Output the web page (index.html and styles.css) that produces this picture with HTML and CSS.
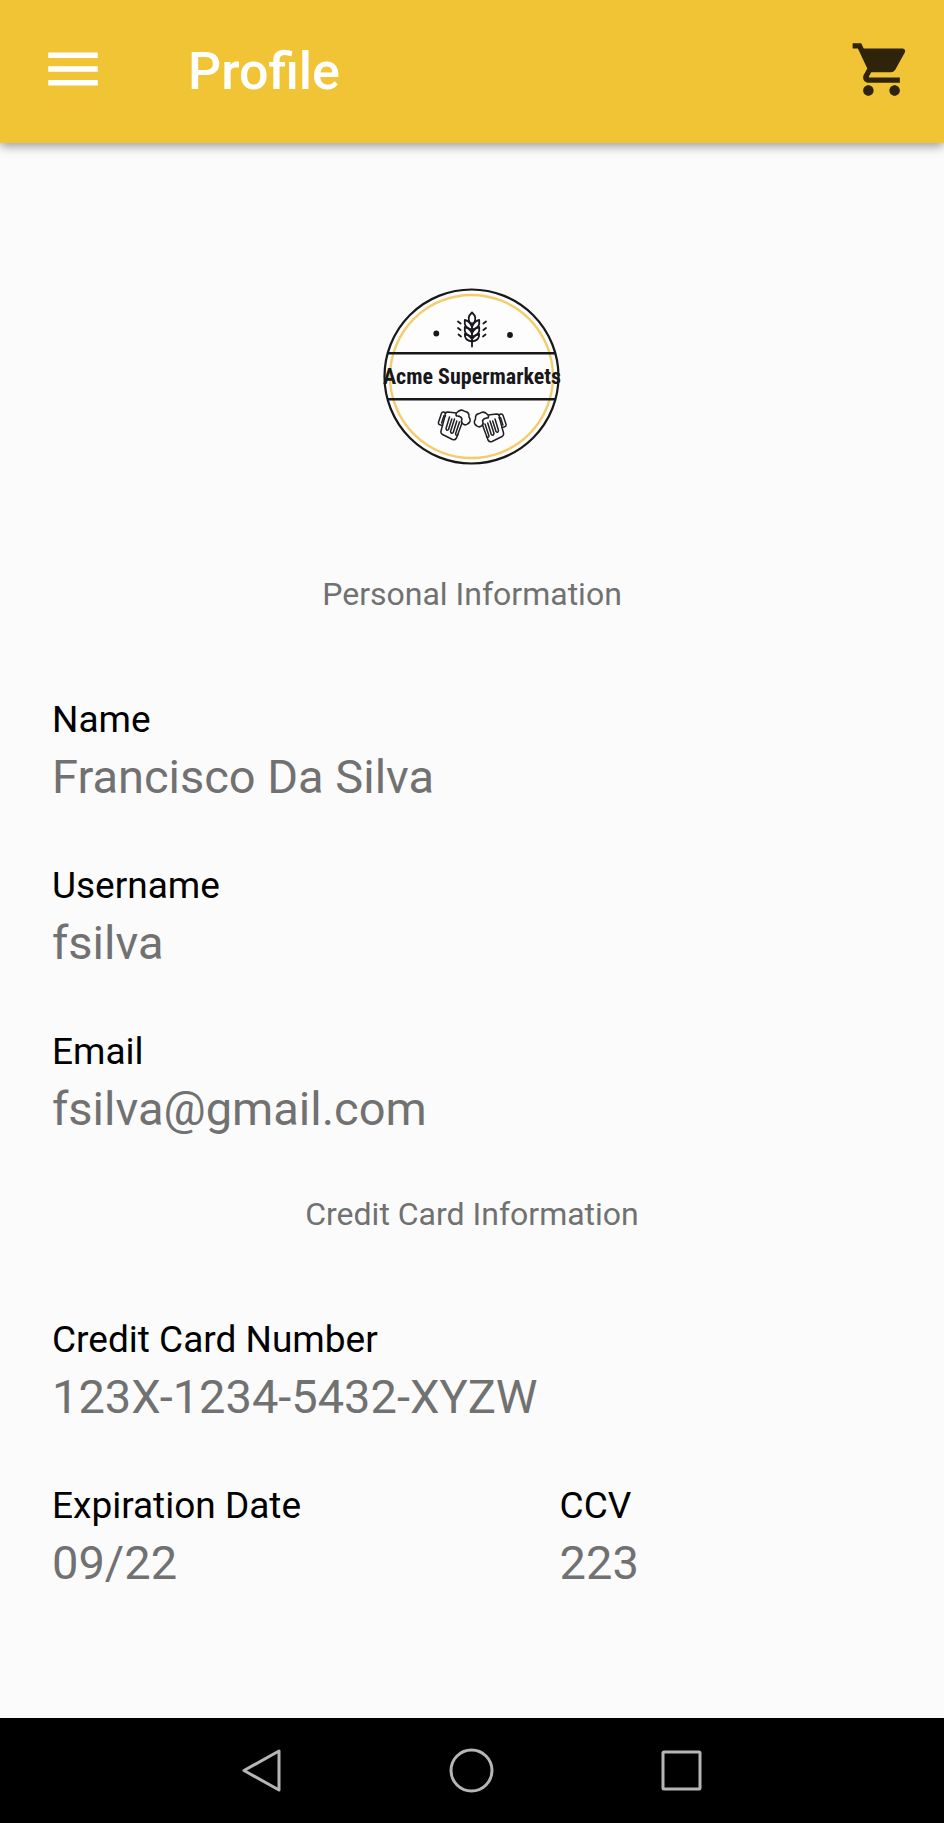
FILE: index.html
```html
<!DOCTYPE html>
<html lang="en">
<head>
<meta charset="utf-8">
<meta name="viewport" content="width=device-width, initial-scale=1">
<title>Profile</title>
<link rel="stylesheet" href="styles.css">
</head>
<body class="screen">
<header class="app-bar">
  <button class="icon-button" type="button" aria-label="Open menu">
    <svg class="menu-icon" viewBox="0 0 24 24" aria-hidden="true"><path fill="currentColor" d="M3 18h18v-2H3v2zm0-5h18v-2H3v2zm0-7v2h18V6H3z"/></svg>
  </button>
  <h1 class="title">Profile</h1>
  <button class="icon-button cart-button" type="button" aria-label="Shopping cart">
    <svg class="cart-icon" viewBox="0 0 24 24" aria-hidden="true"><path fill="currentColor" d="M7 18c-1.1 0-1.99.9-1.99 2S5.9 22 7 22s2-.9 2-2-.9-2-2-2zM1 2v2h2l3.6 7.59-1.35 2.45c-.16.28-.25.61-.25.96 0 1.1.9 2 2 2h12v-2H7.42c-.14 0-.25-.11-.25-.25l.03-.12.9-1.63h7.45c.75 0 1.41-.41 1.75-1.03l3.58-6.49c.08-.14.12-.31.12-.48 0-.55-.45-1-1-1H5.21l-.94-2H1zm16 16c-1.1 0-1.99.9-1.99 2s.89 2 1.99 2 2-.9 2-2-.9-2-2-2z"/></svg>
  </button>
</header>

<main class="profile">
  <svg class="logo" viewBox="0 0 180 180" role="img" aria-label="Acme Supermarkets">
    <circle cx="89.500" cy="90.5" r="87" fill="#fdfdfd" stroke="#17171c" stroke-width="2.2"/>
    <circle cx="89.500" cy="90.5" r="81.5" fill="none" stroke="#f2cd6b" stroke-width="2.4"/>
    <path d="M6 67.300H173.500M6 113.300H173.500" stroke="#17171c" stroke-width="2.400"/>
    <circle cx="54.300" cy="47.500" r="2.900" fill="#17171c"/>
    <circle cx="128" cy="49" r="2.900" fill="#17171c"/>
    <g fill="none" stroke="#17171c" stroke-width="1.800" stroke-linecap="round" stroke-linejoin="round">
      <path d="M90 26.500Q84.500 31.500 88 37M90 26.500Q95.500 31.500 92 37M90 37V60.500"/>
      <path d="M90 41Q88 35 82.800 34V38Q84 42.500 90 43.500Q96 42.500 97.200 38V34Q92 35 90 41"/>
      <path d="M90 47.500Q88 42 82.800 41V45Q84 49.500 90 50.500Q96 49.500 97.200 45V41Q92 42 90 47.500"/>
      <path d="M90 53.500Q88 49 82.800 48Q82.500 54.500 90 55.500Q97.500 54.500 97.200 48Q92 49 90 53.500"/>
      <path d="M76 35.500L78.600 37.500M76 42L78.600 44M76.500 48.500L79 50.500M104 35.500L101.400 37.500M104 42L101.400 44M103.500 48.500L101 50.500"/>
    </g>
    <g id="mug" fill="none" stroke="#1f1f24" stroke-width="1.500" stroke-linecap="round" stroke-linejoin="round">
      <path d="M63 130L59 145Q58.500 147.500 60.500 148.500L70.500 153.500Q73 154.500 74.500 152L80 137"/>
      <path d="M64 127L61.500 126Q60 125.800 59.500 127.200L56.400 136.500Q56.200 138.300 57.800 138.800L60.500 139.600M62 129.500L59.600 137"/>
      <path d="M63.500 130Q62 126 66 126Q70 126.500 74.500 127M75.500 126Q79 122.500 83 125.500Q87.500 126 87 131Q90 135.500 85.500 138Q83 140 80.500 137.500M75.500 126Q73 128 74.500 130Q79 129.500 80 133Q78.500 136 80.500 137.500"/>
      <path d="M67.500 131L64 142.500Q64.500 145.500 66.500 143.500L69.800 133M72.500 133L68.500 145.500Q69.300 148.500 71.200 146.500L74.800 135M77.500 136L73.500 148Q74.300 150.500 76 148.500"/>
    </g>
    <use href="#mug" transform="matrix(-1 0 0 1 180.500 2)"/>
    <text class="logo-text" x="90" y="98" text-anchor="middle">Acme Supermarkets</text>
  </svg>

  <section class="group">
    <h2 class="group-title">Personal Information</h2>
    <dl class="fields">
      <div class="field wide"><dt class="label">Name</dt><dd class="value">Francisco Da Silva</dd></div>
      <div class="field wide"><dt class="label">Username</dt><dd class="value">fsilva</dd></div>
      <div class="field wide"><dt class="label">Email</dt><dd class="value">fsilva@gmail.com</dd></div>
    </dl>
  </section>

  <section class="group">
    <h2 class="group-title">Credit Card Information</h2>
    <dl class="fields">
      <div class="field wide"><dt class="label">Credit Card Number</dt><dd class="value">123X-1234-5432-XYZW</dd></div>
      <div class="field"><dt class="label">Expiration Date</dt><dd class="value">09/22</dd></div>
      <div class="field"><dt class="label">CCV</dt><dd class="value">223</dd></div>
    </dl>
  </section>
</main>

<nav class="system-bar" aria-label="System">
  <button class="system-button" type="button" aria-label="Back">
    <svg class="system-icon" viewBox="0 0 48 48" aria-hidden="true"><path d="M41 4V43L6 23.500Z"/></svg>
  </button>
  <button class="system-button" type="button" aria-label="Home">
    <svg class="system-icon" viewBox="0 0 48 48" aria-hidden="true"><circle cx="23.500" cy="23.500" r="20.500"/></svg>
  </button>
  <button class="system-button" type="button" aria-label="Recent apps">
    <svg class="system-icon" viewBox="0 0 48 48" aria-hidden="true"><rect x="5" y="5" width="37" height="37" rx="1"/></svg>
  </button>
</nav>
</body>
</html>
```
FILE: styles.css
```css
* {
  box-sizing: border-box;
}

.screen {
  margin: 0;
  min-height: 100vh;
  display: flex;
  flex-direction: column;
  background: #fbfbfb;
  color: #000;
  font-family: Roboto, "Liberation Sans", sans-serif;
}

button {
  margin: 0;
  padding: 0;
  border: 0;
  background: none;
  cursor: pointer;
}

.app-bar {
  display: flex;
  align-items: center;
  padding: 41px 31px 41px 40px;
  background: #f0c435;
  box-shadow: 0 3px 10px rgba(0, 0, 0, 0.4);
}

.icon-button {
  display: flex;
  padding-bottom: 5px;
  color: #fff;
}

.cart-button {
  margin-left: auto;
  color: #2f240a;
}

.menu-icon {
  width: 66px;
  height: 66px;
  margin: -5px 0;
}

.cart-icon {
  width: 63px;
  height: 63px;
  margin: -4px 0;
}

.title {
  margin: 0 0 0 82px;
  color: #fff;
  font-size: 52px;
  line-height: 61px;
  font-weight: 500;
}

.profile {
  flex: 1;
  padding: 143px 0 64px;
}

.logo {
  display: block;
  width: 180px;
  height: 180px;
  margin: 0 auto 109px;
  overflow: visible;
}

.logo-text {
  fill: #17171c;
  font-family: "Roboto Condensed", "Liberation Sans Narrow", Roboto, sans-serif;
  font-size: 22px;
  font-weight: 700;
}

.group {
  margin-bottom: 58px;
}

.group-title {
  margin: 0 0 85px;
  color: #717171;
  font-size: 32px;
  line-height: 38px;
  font-weight: 400;
  text-align: center;
}

.fields {
  display: grid;
  grid-template-columns: 3fr 2fr;
  gap: 59px 6px;
  margin: 0;
  padding: 0 50px 0 52px;
}

.wide {
  grid-column: 1 / -1;
}

.label {
  margin-bottom: 6px;
  font-size: 37px;
  line-height: 44px;
}

.value {
  margin: 0;
  color: #717171;
  font-size: 47px;
  line-height: 57px;
}

.system-bar {
  display: flex;
  justify-content: center;
  background: #000;
}

.system-button {
  display: flex;
  justify-content: center;
  align-items: center;
  width: 210px;
  height: 105px;
}

.system-icon {
  width: 48px;
  height: 48px;
  fill: none;
  stroke: #b6b6b6;
  stroke-width: 3;
  stroke-linejoin: round;
}
```
